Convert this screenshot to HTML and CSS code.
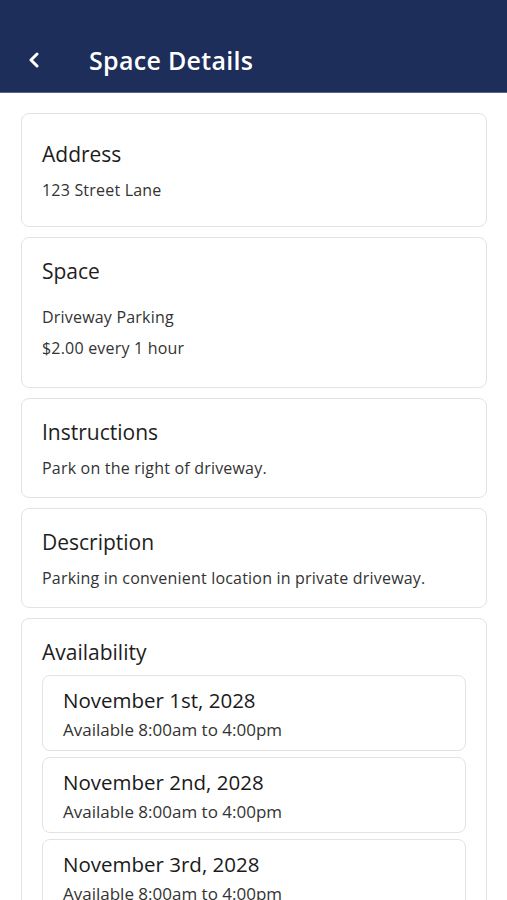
FILE: index.html
```html
<!DOCTYPE html>
<html lang="en">
<head>
    <meta charset="UTF-8">
    <meta name="viewport" content="width=device-width, initial-scale=1.0">
    <title>Space Details</title>
    <link rel="stylesheet" href="styles.css">
</head>
<body>
    <header class="topbar">
        <button class="back-btn" aria-label="Back">
            <svg width="14" height="16" viewBox="0 0 14 16">
                <polyline points="10,2 4,8 10,14" fill="none" stroke="#fff" stroke-width="3" stroke-linecap="round" stroke-linejoin="round"/>
            </svg>
        </button>
        <h1>Space Details</h1>
    </header>

    <main class="content">
        <section class="card card-address">
            <h2>Address</h2>
            <p class="card-text">123 Street Lane</p>
        </section>

        <section class="card">
            <h2>Space</h2>
            <div class="space-lines">
                <p class="card-text">Driveway Parking</p>
                <p class="card-text">$2.00 every 1 hour</p>
            </div>
        </section>

        <section class="card">
            <h2>Instructions</h2>
            <p class="card-text">Park on the right of driveway.</p>
        </section>

        <section class="card">
            <h2>Description</h2>
            <p class="card-text">Parking in convenient location in private driveway.</p>
        </section>

        <section class="card">
            <h2>Availability</h2>
            <div class="date-list">
                <div class="date-item">
                    <h3>November 1st, 2028</h3>
                    <p>Available 8:00am to 4:00pm</p>
                </div>
                <div class="date-item">
                    <h3>November 2nd, 2028</h3>
                    <p>Available 8:00am to 4:00pm</p>
                </div>
                <div class="date-item">
                    <h3>November 3rd, 2028</h3>
                    <p>Available 8:00am to 4:00pm</p>
                </div>
            </div>
        </section>
    </main>
</body>
</html>
```

FILE: styles.css
```css
body {
    font-family: "Open Sans", Lato, sans-serif;
    margin: 0;
    padding: 0;
    background-color: #fff;
    color: #222;
}
.topbar {
    background-color: #1c2e59;
    color: white;
    height: 93px;
    box-sizing: border-box;
    display: flex;
    align-items: flex-end;
    padding: 0 0 16px 27px;
    border-bottom: 1px solid #55648a;
}
.back-btn {
    background: none;
    border: none;
    padding: 0;
    width: 20px;
    height: 32px;
    display: flex;
    align-items: center;
    cursor: pointer;
}
.topbar h1 {
    margin: 0 0 0 42px;
    font-size: 25px;
    line-height: 32px;
    font-weight: 600;
    letter-spacing: 0.3px;
}
.content {
    padding: 20px 20px 0 21px;
}
.card {
    border: 1px solid #e3e3e3;
    border-radius: 8px;
    padding: 19px 20px 18px;
    margin-bottom: 10px;
}
.card-address {
    padding: 26px 20px 25px;
}
.card h2 {
    margin: 0 0 11px;
    font-size: 21px;
    line-height: 28px;
    font-weight: 500;
    color: #1e1e1e;
}
.card-text {
    margin: 0;
    font-size: 16px;
    line-height: 22px;
    letter-spacing: 0.2px;
    color: #333;
}
.space-lines {
    display: flex;
    flex-direction: column;
    gap: 9px;
    padding: 10px 0;
}
.date-list {
    display: flex;
    flex-direction: column;
    gap: 6px;
    margin-top: -2px;
}
.date-item {
    border: 1px solid #e3e3e3;
    border-radius: 8px;
    padding: 10px 20px 9px;
}
.date-item h3 {
    margin: 0 0 5px;
    font-size: 20.5px;
    line-height: 28px;
    font-weight: 500;
    color: #1a1a1a;
}
.date-item p {
    margin: 0;
    font-size: 17px;
    line-height: 22px;
    color: #333;
}
```
